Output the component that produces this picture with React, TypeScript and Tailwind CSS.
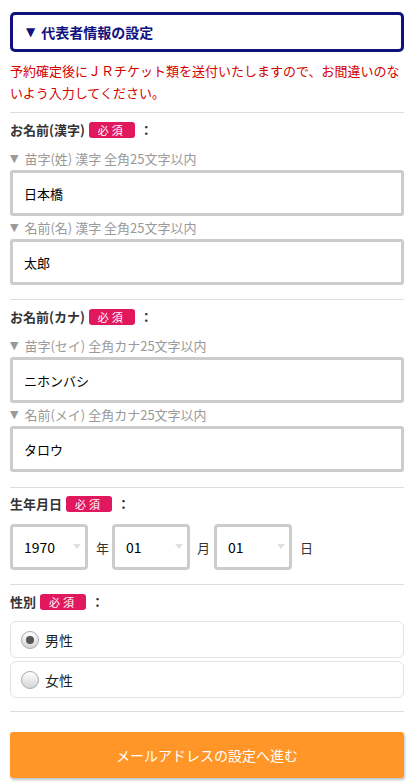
import React from 'react';

const font = { fontFamily: '"Noto Sans CJK JP", "Noto Sans", sans-serif' };
const tri = { fontFamily: '"DejaVu Sans", sans-serif' };

function Badge() {
  return (
    <span className="inline-flex h-[16px] w-[46px] items-center justify-center rounded-[3px] bg-[#e2185f] text-[11px] font-normal leading-none tracking-[3px] text-white">
      必須
    </span>
  );
}

function Label({ text }: { text: string }) {
  return (
    <div className="flex h-[20px] items-center text-[13px] font-bold leading-[20px] text-[#333]">
      <span>{text}</span>
      <span className="ml-[4px] flex items-center"><Badge /></span>
      <span className="ml-[5px]">：</span>
    </div>
  );
}

function Hint({ text, first }: { text: string; first?: boolean }) {
  return (
    <div className={(first ? 'mt-[9px]' : 'mt-[2px]') + ' mb-[1px] flex h-[20px] items-center text-[13px] leading-[20px] text-[#999]'}>
      <span className="text-[11px]" style={tri}>▼</span>
      <span className="ml-[6px]">{text}</span>
    </div>
  );
}

function TextBox({ value }: { value: string }) {
  return (
    <div className="flex h-[46px] items-center rounded-[3px] border-[3px] border-[#cccccc] bg-white pl-[11px] text-[13px] leading-none text-black">
      {value}
    </div>
  );
}

function Select({ value }: { value: string }) {
  return (
    <div className="relative flex h-[46px] w-[78px] items-center rounded-[4px] border-[3px] border-[#cccccc] bg-white pl-[11px] text-[14px] leading-none text-black">
      {value}
      <span className="absolute right-[4px] top-[17px] h-0 w-0 border-x-[4px] border-t-[5px] border-x-transparent border-t-[#e0e0e0]" />
    </div>
  );
}

function Radio({ label, checked }: { label: string; checked?: boolean }) {
  return (
    <div className="flex h-[37px] items-center rounded-[6px] border border-[#e4e4e4] bg-white pl-[10px]">
      <span className="flex h-[18px] w-[18px] items-center justify-center rounded-full border border-[#a8a8a8] bg-gradient-to-b from-[#ffffff] to-[#d4d4d4]">
        {checked && <span className="h-[8px] w-[8px] rounded-full bg-[#555]" />}
      </span>
      <span className="ml-[6px] text-[14px] leading-none text-[#222]">{label}</span>
    </div>
  );
}

export default function App() {
  return (
    <div className="min-h-screen bg-white px-[10px] pt-[12px]" style={font}>
      {/* header */}
      <div className="flex h-[40px] items-center rounded-[5px] border-[3px] border-[#11117d] pl-[13px] text-[14px] font-bold leading-none text-[#11117d]">
        <span className="text-[12px]" style={tri}>▼</span>
        <span className="ml-[6px]">代表者情報の設定</span>
      </div>

      <p className="mt-[8px] text-[13px] leading-[22px] text-[#d40000]">
        予約確定後にＪＲチケット類を送付いたしますので、お間違いのないよう入力してください。
      </p>

      {/* kanji name */}
      <div className="mt-[8px] border-t border-[#dddddd] pt-[7px] pb-[14px]">
        <Label text="お名前(漢字)" />
        <Hint first text="苗字(姓) 漢字 全角25文字以内" />
        <TextBox value="日本橋" />
        <Hint text="名前(名) 漢字 全角25文字以内" />
        <TextBox value="太郎" />
      </div>

      {/* kana name */}
      <div className="border-t border-[#dddddd] pt-[7px] pb-[15px]">
        <Label text="お名前(カナ)" />
        <Hint first text="苗字(セイ) 全角カナ25文字以内" />
        <TextBox value="ニホンバシ" />
        <Hint text="名前(メイ) 全角カナ25文字以内" />
        <TextBox value="タロウ" />
      </div>

      {/* birthday */}
      <div className="border-t border-[#dddddd] pt-[6px] pb-[14px]">
        <Label text="生年月日" />
        <div className="mt-[10px] flex items-center text-[13px] leading-none text-[#333]">
          <Select value="1970" />
          <span className="ml-[8px] mr-[3px]">年</span>
          <Select value="01" />
          <span className="ml-[7px] mr-[4px]">月</span>
          <Select value="01" />
          <span className="ml-[8px]">日</span>
        </div>
      </div>

      {/* gender */}
      <div className="border-t border-[#dddddd] pt-[7px] pb-[13px]">
        <Label text="性別" />
        <div className="mt-[9px] flex flex-col gap-[3px]">
          <Radio label="男性" checked />
          <Radio label="女性" />
        </div>
      </div>

      <div className="border-t border-[#dddddd] pt-[20px]">
        <button className="flex h-[46px] w-full items-center justify-center rounded-[3px] bg-[#ff9627] text-[14px] leading-none text-white shadow-[1px_2px_3px_rgba(0,0,0,0.25)]">
          メールアドレスの設定へ進む
        </button>
      </div>
    </div>
  );
}
